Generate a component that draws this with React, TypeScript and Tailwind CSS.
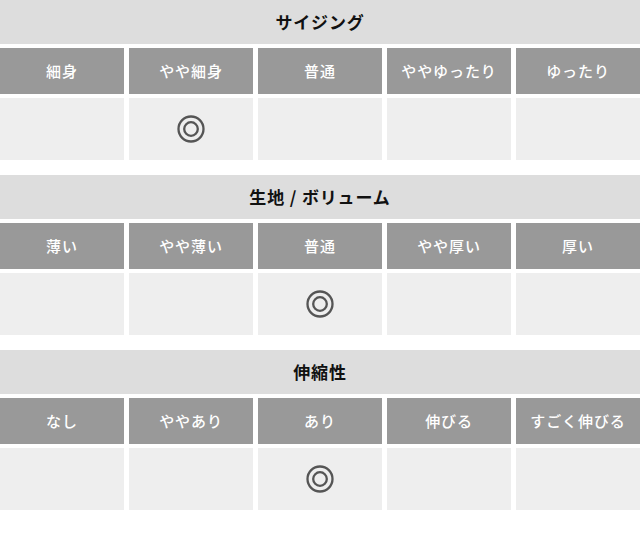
import React from 'react';

type Section = {
  title: string;
  labels: string[];
  selected: number;
};

const sections: Section[] = [
  { title: 'サイジング', labels: ['細身', 'やや細身', '普通', 'ややゆったり', 'ゆったり'], selected: 1 },
  { title: '生地 / ボリューム', labels: ['薄い', 'やや薄い', '普通', 'やや厚い', '厚い'], selected: 2 },
  { title: '伸縮性', labels: ['なし', 'ややあり', 'あり', '伸びる', 'すごく伸びる'], selected: 2 },
];

function DoubleCircle() {
  return (
    <svg width="30" height="30" viewBox="0 0 30 30" fill="none">
      <circle cx="15" cy="15" r="12.5" stroke="#555" strokeWidth="2.3" />
      <circle cx="15" cy="15" r="6.8" stroke="#555" strokeWidth="2.3" />
    </svg>
  );
}

export default function App() {
  return (
    <div
      className="w-[640px] min-h-[533px] bg-white flex flex-col gap-[15px]"
      style={{ fontFamily: '"Noto Sans CJK JP", "Noto Sans", sans-serif' }}
    >
      {sections.map((s) => (
        <div key={s.title} className="flex flex-col gap-1">
          {/* Title bar */}
          <div className="h-[44px] bg-[#dddddd] flex items-center justify-center text-[17px] font-bold text-[#111] tracking-[0.05em]">
            {s.title}
          </div>
          {/* Header row */}
          <div className="grid grid-cols-5 gap-[5px]">
            {s.labels.map((label) => (
              <div
                key={label}
                className="h-[46px] bg-[#999999] flex items-center justify-center text-[15px] font-medium text-white tracking-[0.06em]"
              >
                {label}
              </div>
            ))}
          </div>
          {/* Value row */}
          <div className="grid grid-cols-5 gap-[5px]">
            {s.labels.map((label, i) => (
              <div key={label} className="h-[62px] bg-[#eeeeee] flex items-center justify-center">
                {i === s.selected && <DoubleCircle />}
              </div>
            ))}
          </div>
        </div>
      ))}
    </div>
  );
}
